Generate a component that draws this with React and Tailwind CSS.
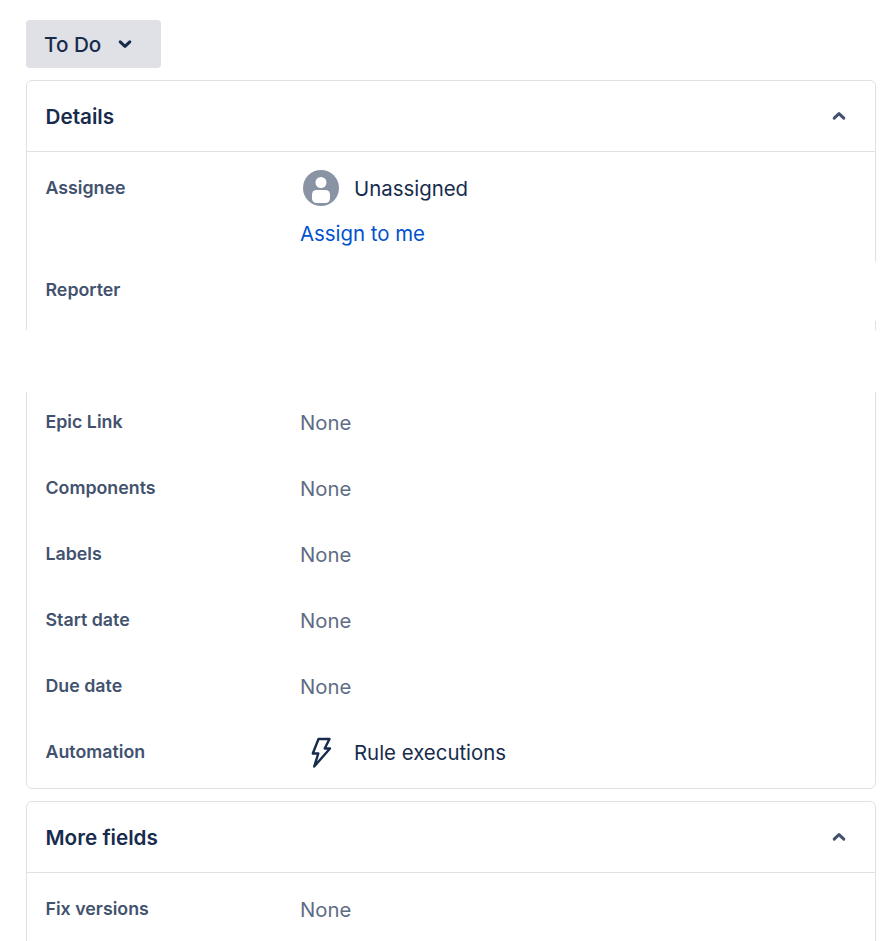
import React from "react";

const Chevron = ({ up, className }) => (
  <svg width="24" height="24" viewBox="0 0 24 24" className={className} fill="none">
    <path d={up ? "M7.2 14.2 L12 9.6 L16.8 14.2" : "M7.2 9.8 L12 14.4 L16.8 9.8"} stroke="currentColor" strokeWidth="3" strokeLinecap="round" strokeLinejoin="round" />
  </svg>
);

const Label = ({ children }) => (
  <div className="w-[254.5px] shrink-0 text-[17.8px] leading-[24px] font-semibold text-[#42526e]">{children}</div>
);

const NoneRow = ({ label }) => (
  <div className="flex h-[66px] pl-[18.5px]">
    <Label>{label}</Label>
    <div className="-mt-px text-[20.3px] leading-[28px] text-[#5e6c84]">None</div>
  </div>
);

const Header = ({ title }) => (
  <div className="flex h-[71px] items-center justify-between border-b border-[#dfe1e6] pl-[18.5px] pr-[24px]">
    <div className="mt-[2px] text-[20.7px] font-semibold text-[#172b4d]">{title}</div>
    <Chevron up className="text-[#42526e]" />
  </div>
);

export default function App() {
  return (
    <div className="relative h-[941px] w-[891px] overflow-hidden bg-white pl-[26px] pr-[15px] pt-[20px] font-['Inter',sans-serif] antialiased">
      <button className="flex h-[48px] w-[135px] items-center rounded-[4px] bg-[#dfe1e6] pl-[18px] text-[20.7px] font-medium text-[#172b4d]">
        <span className="mt-[2px]">To Do</span>
        <Chevron className="ml-[12px]" />
      </button>

      <section className="relative mt-[12px] h-[709px] rounded-[6px] border border-[#dfe1e6]">
        <Header title="Details" />
        <div className="pt-[24px]">
          <div className="flex h-[102px] pl-[18.5px]">
            <Label>Assignee</Label>
            <div>
              <div className="flex items-center">
                <svg width="36" height="36" viewBox="0 0 36 36" className="ml-[3px] -mt-[6px]">
                  <circle cx="18" cy="18" r="18" fill="#8993a4" />
                  <circle cx="18" cy="12.5" r="5.5" fill="#fff" />
                  <rect x="9" y="20" width="18" height="13" rx="4.5" fill="#fff" />
                </svg>
                <span className="ml-[15px] -mt-[4px] text-[20.4px] leading-[28px] text-[#172b4d]">Unassigned</span>
              </div>
              <a className="mt-[14px] block text-[20.4px] leading-[28px] text-[#0052cc]">Assign to me</a>
            </div>
          </div>
          <div className="flex h-[132px] pl-[18.5px]">
            <Label>Reporter</Label>
          </div>
          <NoneRow label="Epic Link" />
          <NoneRow label="Components" />
          <NoneRow label="Labels" />
          <NoneRow label="Start date" />
          <NoneRow label="Due date" />
          <div className="flex pl-[18.5px]">
            <Label>Automation</Label>
            <div className="-mt-[3px] flex items-center">
              <svg width="24" height="32" viewBox="0 0 24 32" fill="none" className="ml-[9px]">
                <path d="M9.5 2 H20.5 L15.7 11.5 H21 L5.2 29.5 L9.3 16.5 H3.8 Z" stroke="#172b4d" strokeWidth="2.4" strokeLinejoin="round" />
              </svg>
              <span className="ml-[21px] text-[20.4px] leading-[28px] text-[#172b4d]">Rule executions</span>
            </div>
          </div>
        </div>
        <div className="absolute -left-[2px] -right-[2px] top-[249px] h-[62px] bg-white" />
        <div className="absolute -right-[2px] top-[181px] h-[59px] w-[6px] bg-white" />
      </section>

      <section className="mt-[12px] h-[300px] rounded-[6px] border border-[#dfe1e6]">
        <Header title="More fields" />
        <div className="pt-[24px]">
          <NoneRow label="Fix versions" />
        </div>
      </section>
    </div>
  );
}
